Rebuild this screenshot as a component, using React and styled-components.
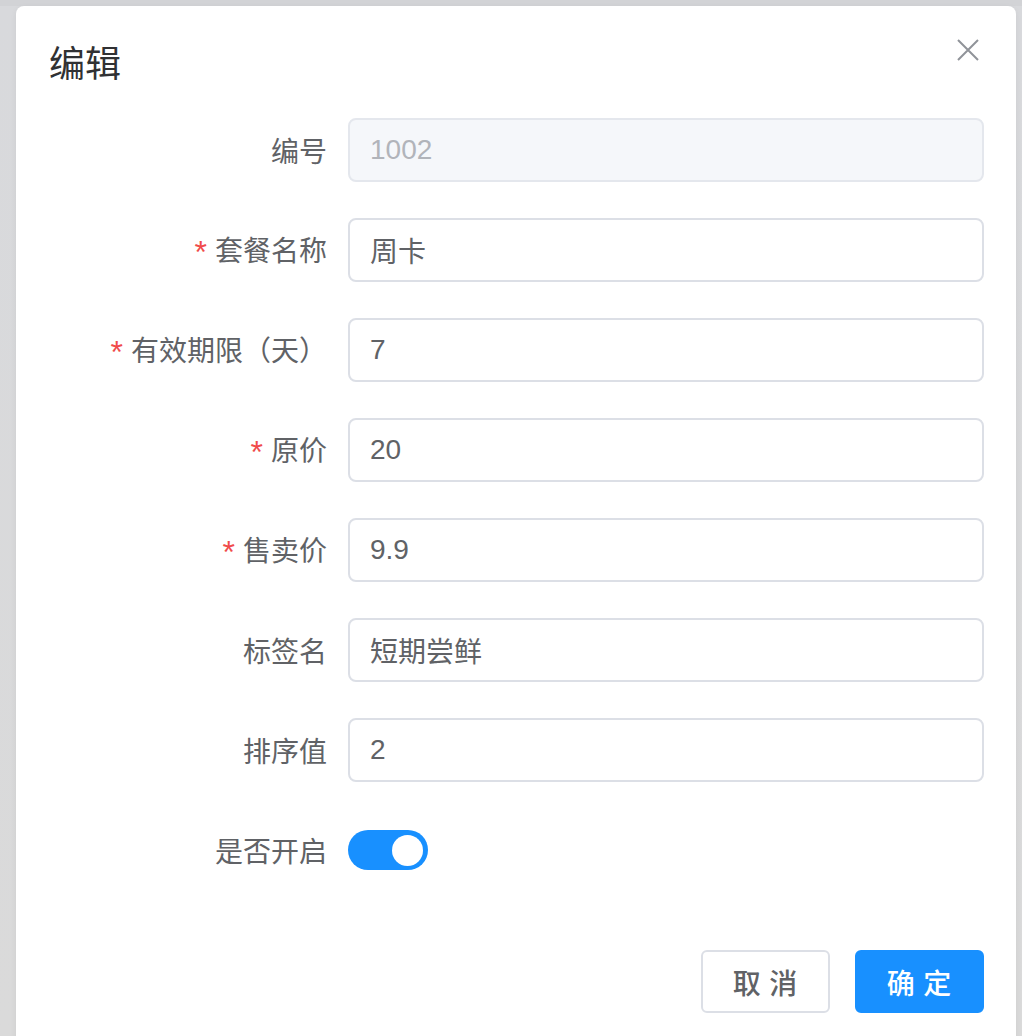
import React from 'react';
import styled, { createGlobalStyle } from 'styled-components';

const GlobalStyle = createGlobalStyle`
  html, body {
    margin: 0;
    padding: 0;
    height: 100%;
    overflow: hidden;
  }
  body {
    font-family: "Liberation Sans", "Noto Sans CJK SC", sans-serif;
    background: #d9d9db;
  }
`;

const Backdrop = styled.div`
  height: 100vh;
  box-sizing: border-box;
  padding: 6px 6px 0 16px;
  background: linear-gradient(to bottom, #d2d3d6 0, #d2d3d6 6px, #d8d9dc 6px, #dadada 100%);
  overflow: hidden;
`;

const Dialog = styled.div`
  position: relative;
  width: 1000px;
  min-height: 1100px;
  background: #fff;
  border-radius: 8px 8px 0 0;
  box-shadow: 0 2px 6px rgba(0, 0, 0, 0.06);
`;

const Header = styled.div`
  padding: 31px 32px 0 33px;
`;

const Title = styled.div`
  font-size: 36px;
  line-height: 48px;
  color: #303133;
  font-family: "Noto Sans CJK SC", sans-serif;
`;

const CloseButton = styled.button`
  position: absolute;
  top: 32px;
  right: 36px;
  width: 24px;
  height: 24px;
  padding: 0;
  border: none;
  background: transparent;
  cursor: pointer;
  display: flex;
  align-items: center;
  justify-content: center;
`;

const Body = styled.div`
  padding: 33px 32px 0 32px;
`;

const FormItem = styled.div`
  display: flex;
  align-items: center;
  height: 64px;
  margin-bottom: 36px;
`;

const Label = styled.label`
  width: 300px;
  box-sizing: border-box;
  padding-right: 21px;
  text-align: right;
  font-size: 28px;
  color: #606266;
  font-family: "Noto Sans CJK SC", sans-serif;
  white-space: nowrap;
`;

const Star = styled.span`
  color: #f04b4b;
  margin-right: 8px;
  font-size: 32px;
  font-family: "Liberation Sans", sans-serif;
  vertical-align: -2px;
`;

const Input = styled.input`
  flex: 1;
  height: 64px;
  box-sizing: border-box;
  border: 2px solid ${p => (p.disabled ? '#e4e7ed' : '#dcdfe6')};
  border-radius: 8px;
  background: ${p => (p.disabled ? '#f5f7fa' : '#fff')};
  color: ${p => (p.disabled ? '#b1b4ba' : '#606266')};
  font-size: 28px;
  font-family: "Liberation Sans", "Noto Sans CJK SC", sans-serif;
  padding: 0 20px;
  outline: none;
  min-width: 0;
`;

const Switch = styled.div`
  width: 80px;
  height: 40px;
  border-radius: 20px;
  background: ${p => (p.on ? '#1890ff' : '#dcdfe6')};
  display: flex;
  align-items: center;
  justify-content: ${p => (p.on ? 'flex-end' : 'flex-start')};
  padding: 0 5px;
  box-sizing: border-box;
`;

const Knob = styled.div`
  width: 31px;
  height: 31px;
  border-radius: 50%;
  background: #fff;
`;

const Footer = styled.div`
  display: flex;
  justify-content: flex-end;
  gap: 25px;
  padding-top: 32px;
`;

const Button = styled.button`
  width: 129px;
  height: 63px;
  box-sizing: border-box;
  border-radius: 6px;
  border: 2px solid ${p => (p.primary ? '#1890ff' : '#dcdfe6')};
  background: ${p => (p.primary ? '#1890ff' : '#fff')};
  color: ${p => (p.primary ? '#fff' : '#606266')};
  font-size: 28px;
  font-weight: 500;
  letter-spacing: 1px;
  font-family: "Noto Sans CJK SC", sans-serif;
  cursor: pointer;
  padding: 0;
`;

const fields = [
  { label: '编号', value: '1002', disabled: true },
  { label: '套餐名称', value: '周卡', required: true },
  { label: '有效期限（天）', value: '7', required: true },
  { label: '原价', value: '20', required: true },
  { label: '售卖价', value: '9.9', required: true },
  { label: '标签名', value: '短期尝鲜' },
  { label: '排序值', value: '2' },
];

export default function App() {
  return (
    <>
      <GlobalStyle />
      <Backdrop>
        <Dialog>
          <Header>
            <Title>编辑</Title>
          </Header>
          <CloseButton aria-label="close">
            <svg width="22" height="22" viewBox="0 0 22 22">
              <path d="M1 1 L21 21 M21 1 L1 21" stroke="#909399" strokeWidth="2" fill="none" />
            </svg>
          </CloseButton>
          <Body>
            {fields.map(f => (
              <FormItem key={f.label}>
                <Label>
                  {f.required && <Star>*</Star>}
                  {f.label}
                </Label>
                <Input defaultValue={f.value} disabled={f.disabled} />
              </FormItem>
            ))}
            <FormItem>
              <Label>是否开启</Label>
              <Switch on>
                <Knob />
              </Switch>
            </FormItem>
            <Footer>
              <Button>取 消</Button>
              <Button primary>确 定</Button>
            </Footer>
          </Body>
        </Dialog>
      </Backdrop>
    </>
  );
}
